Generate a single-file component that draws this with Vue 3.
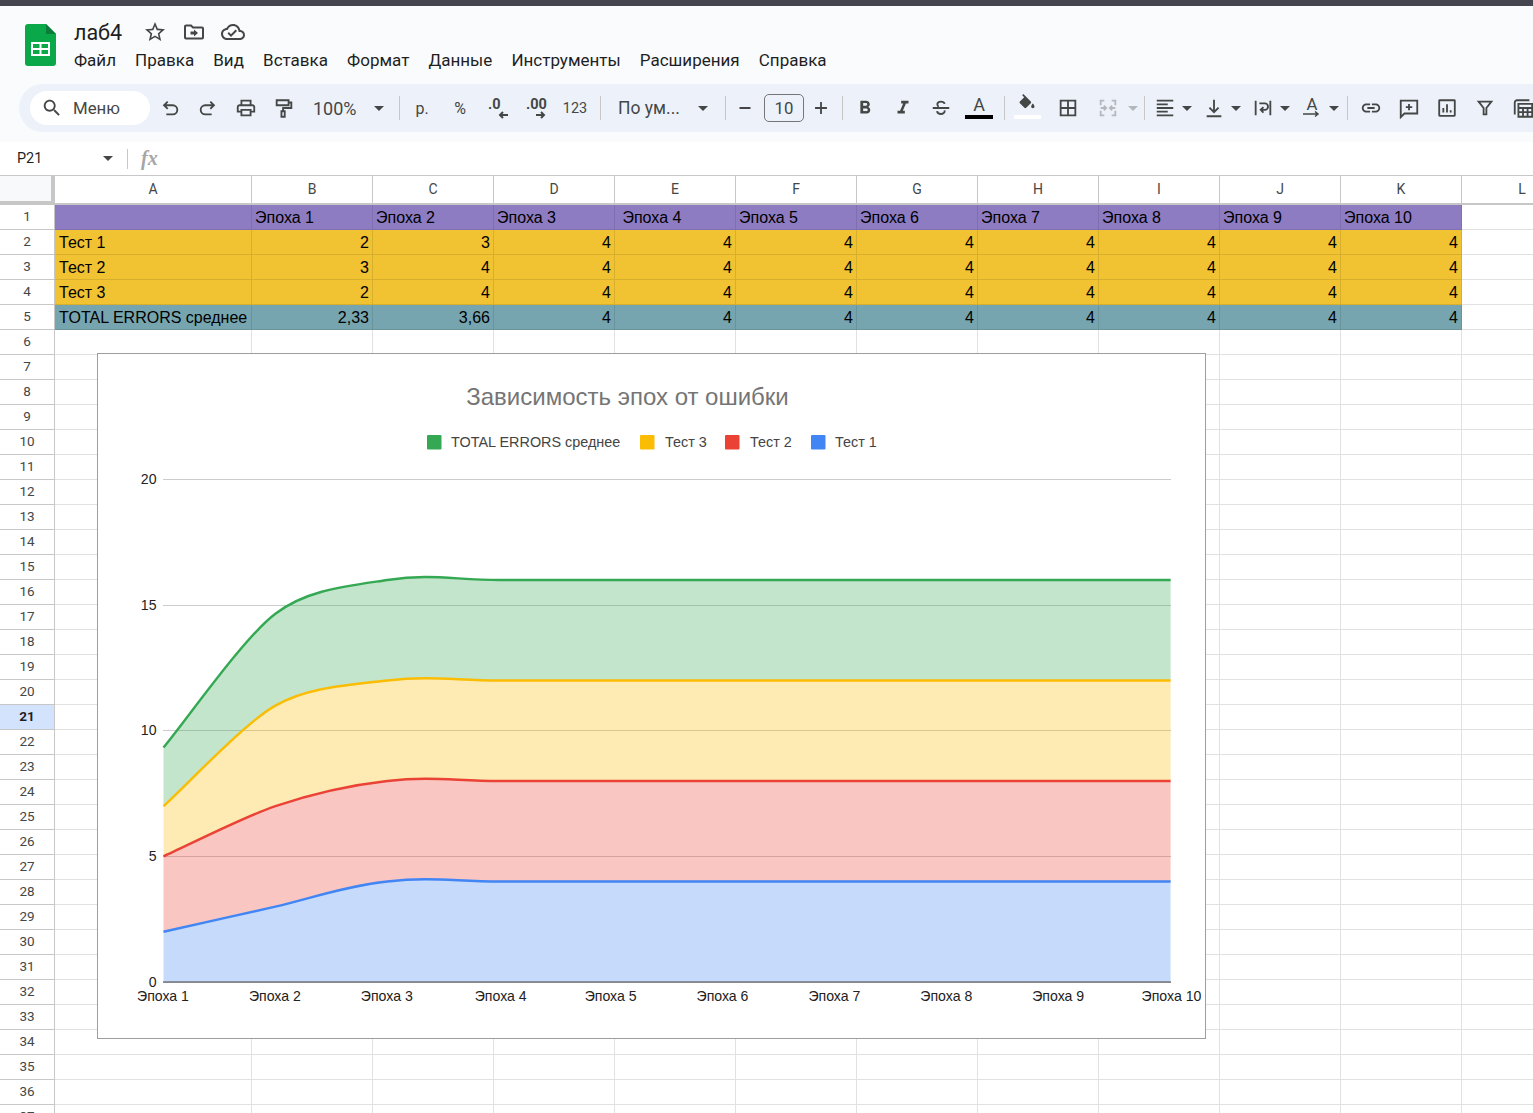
<script setup>
const menu = ['Файл', 'Правка', 'Вид', 'Вставка', 'Формат', 'Данные', 'Инструменты', 'Расширения', 'Справка']

const P = {
  search: { f: 'M15.5 14h-.79l-.28-.27C15.41 12.59 16 11.11 16 9.5 16 5.91 13.09 3 9.5 3S3 5.91 3 9.5 5.91 16 9.5 16c1.61 0 3.09-.59 4.23-1.57l.27.28v.79l5 4.99L20.49 19l-4.99-5zm-6 0C7.01 14 5 11.99 5 9.5S7.01 5 9.5 5 14 7.01 14 9.5 11.99 14 9.5 14z' },
  star: { f: 'M22 9.24l-7.19-.62L12 2 9.19 8.63 2 9.24l5.46 4.73L5.82 21 12 17.27 18.18 21l-1.63-7.03L22 9.24zM12 15.4l-3.76 2.27 1-4.28-3.32-2.88 4.38-.38L12 6.1l1.71 4.04 4.38.38-3.32 2.88 1 4.28L12 15.4z' },
  move: { s: 'M3 6.5a1 1 0 0 1 1-1h5l2 2h9a1 1 0 0 1 1 1v9a1 1 0 0 1-1 1H4a1 1 0 0 1-1-1z', f: 'M12 9.5l4 3.5-4 3.5V14.5H8.5v-3H12z' },
  cloud: { f: 'M19.35 10.04C18.67 6.59 15.64 4 12 4 9.11 4 6.6 5.64 5.35 8.04 2.34 8.36 0 10.91 0 14c0 3.31 2.69 6 6 6h13c2.76 0 5-2.24 5-5 0-2.64-2.05-4.78-4.65-4.96zM19 18H6c-2.21 0-4-1.79-4-4 0-2.05 1.53-3.76 3.56-3.97l1.07-.11.5-.95C8.08 7.14 9.94 6 12 6c2.62 0 4.88 1.86 5.39 4.43l.3 1.5 1.53.11c1.56.1 2.78 1.41 2.78 2.96 0 1.65-1.35 3-3 3zm-9-3.82l-2.09-2.09L6.5 13.5 10 17l6.01-6.01-1.41-1.41z' },
  undo: { s: 'M9.5 5 5.5 9l4 4M5.5 9H15a5 5 0 0 1 0 10H8' },
  redo: { s: 'M14.5 5l4 4-4 4M18.5 9H9a5 5 0 0 0 0 10h7' },
  print: { f: 'M19 8h-1V3H6v5H5c-1.66 0-3 1.34-3 3v6h4v4h12v-4h4v-6c0-1.66-1.34-3-3-3zM8 5h8v3H8V5zm8 12v2H8v-4h8v2zm2-2v-2H6v2H4v-4c0-.55.45-1 1-1h14c.55 0 1 .45 1 1v4h-2z' },
  paint: { s: 'M4 3.5h13v5.5H4zM17 6h3v6h-9v3.5M9.2 15.5h3.6v6H9.2z' },
  minus: { s: 'M6 12h12' },
  plus: { s: 'M5.5 12h13M12 5.5v13' },
  bold: { f: 'M15.6 10.79c.97-.67 1.65-1.77 1.65-2.79 0-2.26-1.75-4-4-4H7v14h7.04c2.09 0 3.71-1.7 3.71-3.79 0-1.52-.86-2.82-2.15-3.42zM10 6.5h3c.83 0 1.5.67 1.5 1.5s-.67 1.5-1.5 1.5h-3v-3zm3.5 9H10v-3h3.5c.83 0 1.5.67 1.5 1.5s-.67 1.5-1.5 1.5z', s: 'M8.5 5.5v11h5' },
  italic: { f: 'M10 4v3h2.21l-3.42 8H6v3h8v-3h-2.21l3.42-8H18V4z' },
  strike: { s: 'M3 12h18M16 7.5C15.5 5.5 14 5 12 5S8 6 8 8c0 1.2.6 2 1.5 2.6M16 14.5c.4 2.5-1.8 4-4 4s-4-1-4.3-3.2' },
  fill: { f: 'M16.56 8.94L7.62 0 6.21 1.41l2.38 2.38-5.15 5.15c-.59.59-.59 1.54 0 2.12l5.5 5.5c.29.29.68.44 1.06.44s.77-.15 1.06-.44l5.5-5.5c.59-.58.59-1.53 0-2.12zM19 11.5s-2 2.17-2 3.5c0 1.1.9 2 2 2s2-.9 2-2c0-1.33-2-3.5-2-3.5z' },
  borders: { s: 'M4 4h16v16H4zM12 4v16M4 12h16' },
  merge: { s: 'M4 9V4h4M16 4h4v5M4 15v5h4M16 20h4v-5M4 12h6M7.5 9.5 10 12l-2.5 2.5M20 12h-6M16.5 9.5 14 12l2.5 2.5' },
  align: { s: 'M3 4h18M3 8h12M3 12h18M3 16h12M3 20h18' },
  valign: { s: 'M12 3v13M7 11.5l5 5 5-5M4 21h16' },
  wrap: { s: 'M4 4v16M20 4v16M8 7h6a3.5 3.5 0 0 1 0 7h-4M12.5 11l-3 3 3 3' },
  link: { f: 'M3.9 12c0-1.71 1.39-3.1 3.1-3.1h4V7H7c-2.76 0-5 2.24-5 5s2.24 5 5 5h4v-1.9H7c-1.71 0-3.1-1.39-3.1-3.1zM8 13h8v-2H8v2zm9-6h-4v1.9h4c1.71 0 3.1 1.39 3.1 3.1s-1.39 3.1-3.1 3.1h-4V17h4c2.76 0 5-2.24 5-5s-2.24-5-5-5z' },
  comment: { s: 'M3 4h18v14H7l-4 4zM12 7.5v7M8.5 11h7' },
  chart: { s: 'M4 3.5h16a.5.5 0 0 1 .5.5v16a.5.5 0 0 1-.5.5H4a.5.5 0 0 1-.5-.5V4a.5.5 0 0 1 .5-.5zM8 12v5M12 8v9M16 14.5V17' },
  filter: { s: 'M5 5h14l-5.5 7v7h-3v-7z' },
  table: { s: 'M3 19V6a2.5 2.5 0 0 1 2.5-2.5H19M7 7.5h15v14H7zM7 12h15M7 16.5h15M12 12v9.5M17 12v9.5' }
}

const tools = [
  { t: 'icon', i: 'undo' }, { t: 'icon', i: 'redo' }, { t: 'icon', i: 'print' }, { t: 'icon', i: 'paint' },
  { t: 'select', label: '100%', c: 'zoom' },
  { t: 'sep', c: 's1' },
  { t: 'text', label: 'р.' }, { t: 'text', label: '%' },
  { t: 'dec', label: '.0', dir: 'M10 4H2M5 1 2 4l3 3' },
  { t: 'dec', label: '.00', dir: 'M0 4h8M5 1l3 3-3 3' },
  { t: 'text', label: '123', c: 'num' },
  { t: 'sep', c: 's2' },
  { t: 'select', label: 'По ум...', c: 'font' },
  { t: 'sep', c: 's3' },
  { t: 'icon', i: 'minus' },
  { t: 'size', label: '10' },
  { t: 'icon', i: 'plus', c: 'w34' },
  { t: 'sep', c: 's4' },
  { t: 'icon', i: 'bold', c: 'ml3' }, { t: 'icon', i: 'italic' }, { t: 'icon', i: 'strike' },
  { t: 'color' },
  { t: 'sep', c: 's5' },
  { t: 'bucket', i: 'fill' },
  { t: 'icon', i: 'borders', c: 'ml3' },
  { t: 'icon', i: 'merge', c: 'off ml2' },
  { t: 'caret', c: 'off narrow' },
  { t: 'sep', c: 's6' },
  { t: 'icon', i: 'align', c: 'w30 ml5' }, { t: 'caret' },
  { t: 'icon', i: 'valign', c: 'w30 ml5' }, { t: 'caret' },
  { t: 'icon', i: 'wrap', c: 'w30 ml5' }, { t: 'caret' },
  { t: 'rot' }, { t: 'caret' },
  { t: 'sep', c: 's7' },
  { t: 'icon', i: 'link', c: 'ml4' }, { t: 'icon', i: 'comment' }, { t: 'icon', i: 'chart' }, { t: 'icon', i: 'filter' }, { t: 'icon', i: 'table' }
]

const cols = ['A', 'B', 'C', 'D', 'E', 'F', 'G', 'H', 'I', 'J', 'K', 'L']
const fours = Array(8).fill('4')
const filled = {
  1: { c: 'purple', v: ['', 'Эпоха 1', 'Эпоха 2', 'Эпоха 3', ' Эпоха 4', 'Эпоха 5', 'Эпоха 6', 'Эпоха 7', 'Эпоха 8', 'Эпоха 9', 'Эпоха 10'] },
  2: { c: 'yellow', v: ['Тест 1', '2', '3', ...fours] },
  3: { c: 'yellow', v: ['Тест 2', '3', '4', ...fours] },
  4: { c: 'yellow', v: ['Тест 3', '2', '4', ...fours] },
  5: { c: 'teal', v: ['TOTAL ERRORS среднее', '2,33', '3,66', ...fours] }
}
const rows = Array.from({ length: 37 }, (_, i) => {
  const n = i + 1
  const r = filled[n]
  return {
    n,
    cells: cols.map((_, c) => ({
      text: r && c < 11 ? r.v[c] : '',
      cls: r && c < 11 ? [r.c, n > 1 && c > 0 ? 'right' : ''] : []
    }))
  }
})

/* chart */
const X = (i) => 163.5 + i * 111.9
const Y = (v) => 982 - v * 25.125
const stacked = [
  [0, 0, 0, 0, 0, 0, 0, 0, 0, 0],
  [2, 3, 4, 4, 4, 4, 4, 4, 4, 4],
  [5, 7, 8, 8, 8, 8, 8, 8, 8, 8],
  [7, 11, 12, 12, 12, 12, 12, 12, 12, 12],
  [9.33, 14.66, 16, 16, 16, 16, 16, 16, 16, 16]
]
const pts = (vals) => vals.map((v, i) => [X(i), Y(v)])
const K = [0.2, 0.14, 0.2, 0.2, 0.2, 0.2, 0.2, 0.2, 0.2, 0.2]
function segs(p, reversed) {
  let d = ''
  const n = p.length
  for (let i = 0; i < n - 1; i++) {
    const a = p[Math.max(i - 1, 0)], b = p[i], c = p[i + 1], e = p[Math.min(i + 2, n - 1)]
    const kb = K[reversed ? n - 1 - i : i]
    const kc = K[reversed ? n - 2 - i : i + 1]
    const c1 = [b[0] + (c[0] - a[0]) * kb, b[1] + (c[1] - a[1]) * kb]
    const c2 = [c[0] - (e[0] - b[0]) * kc, c[1] - (e[1] - b[1]) * kc]
    d += `C${c1[0].toFixed(1)} ${c1[1].toFixed(1)} ${c2[0].toFixed(1)} ${c2[1].toFixed(1)} ${c[0].toFixed(1)} ${c[1].toFixed(1)}`
  }
  return d
}
const colors = ['#4285f4', '#ea4335', '#fbbc04', '#34a853']
const series = colors.map((color, s) => {
  const up = pts(stacked[s + 1])
  const lo = pts(stacked[s]).reverse()
  const line = `M${up[0][0]} ${up[0][1]}${segs(up, false)}`
  return { color, line, area: `${line}L${lo[0][0]} ${lo[0][1]}${segs(lo, true)}Z` }
})
const yTicks = [0, 5, 10, 15, 20].map((v) => ({ v, y: Math.floor(Y(v)) + 0.5 }))
const xTicks = ['Эпоха 1', 'Эпоха 2', 'Эпоха 3', 'Эпоха 4', 'Эпоха 5', 'Эпоха 6', 'Эпоха 7', 'Эпоха 8', 'Эпоха 9', 'Эпоха 10']
  .map((label, i) => ({ label, x: i === 9 ? 1171.5 : i === 3 ? X(i) + 1.5 : X(i) - 0.5 }))
const legend = [
  { c: '#34a853', x: 427, tx: 451, label: 'TOTAL ERRORS среднее' },
  { c: '#fbbc04', x: 640, tx: 665, label: 'Тест 3' },
  { c: '#ea4335', x: 725, tx: 750, label: 'Тест 2' },
  { c: '#4285f4', x: 811, tx: 835, label: 'Тест 1' }
]
</script>

<template>
  <div class="page">
    <div class="topbar"></div>
    <header class="head">
      <svg class="logo" viewBox="0 0 31 42">
        <path d="M3 0h18l10 10v29a3 3 0 0 1-3 3H3a3 3 0 0 1-3-3V3a3 3 0 0 1 3-3z" fill="#0ba84a" />
        <path d="M21 0l10 10H21z" fill="#0a7d3a" />
        <path d="M6 18h19v14H6zM8 20v4h6.5v-4zm8.5 0v4H23v-4zM8 26v4h6.5v-4zm8.5 0v4H23v-4z" fill="#fff" fill-rule="evenodd" />
      </svg>
      <div class="titles">
        <div class="doc">
          <span class="name">лаб4</span>
          <svg v-for="n in ['star', 'move', 'cloud']" :key="n" class="ic dark" viewBox="0 0 24 24">
            <path v-if="P[n].f" :d="P[n].f" />
            <path v-if="P[n].s" :d="P[n].s" class="st" />
          </svg>
        </div>
        <nav class="menu"><span v-for="m in menu" :key="m">{{ m }}</span></nav>
      </div>
    </header>
    <div class="headfill">
      <div class="toolbar">
        <div class="searchbox">
          <svg class="ic" viewBox="0 0 24 24"><path :d="P.search.f" /></svg>
          <span>Меню</span>
        </div>
        <template v-for="(t, i) in tools" :key="i">
          <div v-if="t.t === 'sep'" class="sep" :class="t.c"></div>
          <div v-else-if="t.t === 'icon'" class="btn" :class="t.c">
            <svg class="ic" viewBox="0 0 24 24">
              <path v-if="P[t.i].f" :d="P[t.i].f" />
              <path v-if="P[t.i].s" :d="P[t.i].s" class="st" />
            </svg>
          </div>
          <div v-else-if="t.t === 'text'" class="btn label" :class="t.c">{{ t.label }}</div>
          <div v-else-if="t.t === 'select'" class="select" :class="t.c">
            <span>{{ t.label }}</span><i class="tri"></i>
          </div>
          <div v-else-if="t.t === 'caret'" class="caretbtn" :class="t.c"><i class="tri"></i></div>
          <div v-else-if="t.t === 'size'" class="size">{{ t.label }}</div>
          <div v-else-if="t.t === 'dec'" class="btn dec">
            <b>{{ t.label }}</b>
            <svg viewBox="0 0 10 8"><path :d="t.dir" class="st" /></svg>
          </div>
          <div v-else-if="t.t === 'color'" class="btn color"><span>A</span><i></i></div>
          <div v-else-if="t.t === 'bucket'" class="btn bucket ml3">
            <svg class="ic" viewBox="0 0 24 24"><path :d="P.fill.f" /></svg><i></i>
          </div>
          <div v-else-if="t.t === 'rot'" class="btn rot w30 ml5">
            <span>A</span>
            <svg viewBox="0 0 20 8"><path d="M1 3h15M13 0.5 16 3l-3 2.5" class="st" /></svg>
          </div>
        </template>
      </div>
    </div>
    <div class="formula">
      <span class="ref">P21</span><i class="tri"></i>
      <div class="fsep"></div>
      <span class="fx">fx</span>
    </div>
    <div class="sheet">
      <div class="grid">
        <div class="corner"></div>
        <div v-for="c in cols" :key="c" class="colh">{{ c }}</div>
        <template v-for="r in rows" :key="r.n">
          <div class="rowh" :class="{ active: r.n === 21 }">{{ r.n }}</div>
          <div v-for="(cell, ci) in r.cells" :key="ci" class="cell" :class="[cell.cls, { first: ci === 0 }]">{{ cell.text }}</div>
        </template>
      </div>
      <svg class="chart" viewBox="97 353 1109 686" width="1109" height="686">
        <rect x="97.5" y="353.5" width="1108" height="685" fill="#fff" stroke="#9e9e9e" />
        <text x="627.5" y="405" text-anchor="middle" class="title">Зависимость эпох от ошибки</text>
        <g v-for="l in legend" :key="l.label">
          <rect :x="l.x" y="435" width="14.5" height="14.5" rx="1" :fill="l.c" />
          <text :x="l.tx" y="447" class="lg">{{ l.label }}</text>
        </g>
        <g v-for="t in yTicks" :key="t.v">
          <line x1="163" x2="1171" :y1="t.y" :y2="t.y" stroke="#ccc" />
          <text x="156.5" :y="t.y + 4" text-anchor="end" class="ax">{{ t.v }}</text>
        </g>
        <path v-for="s in series" :key="s.color + 'a'" :d="s.area" :fill="s.color" fill-opacity="0.3" />
        <path v-for="s in series" :key="s.color" :d="s.line" :stroke="s.color" fill="none" stroke-width="2.4" />
        <line x1="163" x2="1171" y1="982" y2="982" stroke="#333" stroke-opacity=".6" stroke-width="1.4" />
        <text v-for="t in xTicks" :key="t.label" :x="t.x" y="1001" text-anchor="middle" class="ax">{{ t.label }}</text>
      </svg>
    </div>
  </div>
</template>

<style>
html, body { margin: 0; padding: 0; background: #fff; }
</style>

<style scoped>
.page { width: 1533px; height: 1113px; overflow: hidden; font-family: Roboto, "Liberation Sans", sans-serif; color: #1f1f1f; display: flex; flex-direction: column; }
.topbar { height: 6px; background: #45454f; flex: none; }
.head { height: 78px; flex: none; background: #f9fbfd; display: flex; box-sizing: border-box; padding: 16px 0 0 25px; }
.logo { width: 31px; height: 42px; margin: 2px 18px 0 0; flex: none; }
.titles { display: flex; flex-direction: column; }
.doc { display: flex; align-items: center; height: 20px; }
.name { font-size: 21.5px; width: 69px; color: #1f1f1f; }
.doc .ic { width: 24px; height: 24px; margin-right: 15px; }
.menu { display: flex; gap: 19.1px; font-size: 17px; margin-top: 8px; line-height: 20px; color: #1f1f1f; }
.headfill { background: #f9fbfd; height: 58px; flex: none; box-sizing: border-box; padding-left: 19px; }
.toolbar { height: 48px; background: #edf2fa; border-radius: 24px 0 0 24px; display: flex; align-items: center; padding-left: 11px; overflow: hidden; color: #444746; }
.searchbox { width: 120px; height: 34px; flex: none; border-radius: 17px; background: #fff; display: flex; align-items: center; box-sizing: border-box; padding-left: 11px; font-size: 16.8px; margin-right: 1px; }
.searchbox .ic { margin-right: 10px; }
.ic { width: 22px; height: 22px; fill: currentColor; flex: none; }
.dark { color: #444746; }
.st { fill: none; stroke: currentColor; stroke-width: 2; }
.btn { width: 38px; height: 34px; flex: none; display: flex; align-items: center; justify-content: center; position: relative; }
.w34 { width: 34px; }
.w30 { width: 30px; }
.ml2 { margin-left: 2px; }
.ml3 { margin-left: 3px; }
.ml4 { margin-left: 4px; }
.ml5 { margin-left: 5px; }
.off { color: #b4b8bd; }
.label { font-size: 16px; }
.num { font-size: 14.4px; width: 40px; }
.sep { width: 1px; height: 24px; background: #c7c7c7; flex: none; }
.s1 { margin: 0 3px 0 8px; }
.s2 { margin: 0 7px 0 5px; }
.s3 { margin: 0 0 0 9px; }
.s4 { margin: 0 0 0 4px; }
.s5 { margin: 0 0 0 6px; }
.s6 { margin: 0 0 0 5px; }
.s7 { margin: 0 0 0 6px; }
.select { display: flex; align-items: center; justify-content: space-between; flex: none; box-sizing: border-box; }
.zoom { width: 88px; padding: 0 7px 0 10px; font-size: 18px; }
.font { width: 108px; padding: 0 8px 0 10px; font-size: 17.5px; }
.tri { display: block; width: 0; height: 0; border-left: 5.5px solid transparent; border-right: 5.5px solid transparent; border-top: 5.5px solid currentColor; }
.caretbtn { width: 14px; flex: none; display: flex; justify-content: center; }
.narrow { width: 12px; }
.size { width: 40px; height: 28px; box-sizing: border-box; border: 1px solid #747775; border-radius: 5px; display: flex; align-items: center; justify-content: center; font-size: 16.8px; flex: none; }
.dec { flex-direction: column; align-items: flex-start; justify-content: flex-start; box-sizing: border-box; padding: 7px 0 0 9px; }
.dec b { font-size: 14.5px; line-height: 13px; font-weight: 700; }
.dec svg { width: 10px; height: 8px; margin: 0 0 0 10px; }
.color span { font-size: 18px; line-height: 16px; margin-top: -7px; }
.color i { position: absolute; left: 5px; bottom: 6px; width: 28px; height: 4px; background: #000; }
.bucket .ic { margin-top: -9px; width: 20px; height: 20px; }
.bucket i { position: absolute; left: 6px; bottom: 6px; width: 27px; height: 4px; background: #fff; }
.rot { flex-direction: column; }
.rot span { font-size: 16.8px; line-height: 14px; }
.rot svg { width: 20px; height: 8px; }
.rot .st { stroke-width: 1.5; }
.formula { height: 33px; flex: none; background: #fff; display: flex; align-items: center; box-sizing: border-box; padding-left: 17px; position: relative; }
.ref { font-size: 14.4px; width: 86px; color: #1f1f1f; }
.formula .tri { color: #444746; }
.fsep { width: 1px; height: 20px; background: #c7c7c7; margin: 0 13px 0 14px; }
.fx { font-family: "Liberation Serif", serif; font-style: italic; font-weight: 700; font-size: 20px; color: #a6a6a6; }
.sheet { position: relative; flex: 1; min-height: 0; border-top: 1px solid #c7c7c7; overflow: hidden; }
.grid { display: grid; grid-template-columns: 55px 197px repeat(11, 121px); grid-auto-rows: 25px; grid-template-rows: 29px; }
.corner { background: #f8f9fa; border-right: 4px solid #c7c7c7; border-bottom: 4px solid #c7c7c7; box-sizing: border-box; }
.colh { background: #fff; border-right: 1px solid #c7c7c7; border-bottom: 2px solid #c7c7c7; box-sizing: border-box; display: flex; align-items: center; justify-content: center; font-size: 14px; color: #444746; padding-bottom: 1px; }
.rowh { background: #fff; border-right: 1px solid #c7c7c7; border-bottom: 1px solid #c7c7c7; box-sizing: border-box; display: flex; align-items: center; justify-content: center; font-size: 13.5px; color: #444746; padding-bottom: 2px; }
.active { background: #d3e3fd; font-weight: 700; color: #1f1f1f; }
.cell { border-right: 1px solid #e1e1e1; border-bottom: 1px solid #e1e1e1; box-sizing: border-box; font-family: "Liberation Sans", Arial, sans-serif; font-size: 16px; line-height: 24px; padding: 1px 3px 0; color: #000; white-space: pre; overflow: hidden; }
.first { padding-left: 4px; }
.purple { background: #8e7cc3; border-color: #7f6fb0; }
.yellow { background: #f1c232; border-color: #d8ae2d; }
.teal { background: #76a5af; border-color: #6a949d; }
.right { text-align: right; }
.chart { position: absolute; left: 97px; top: 177px; }
.chart text { font-family: "Liberation Sans", Arial, sans-serif; }
.title { font-size: 24px; fill: #757575; }
.lg { font-size: 14.4px; fill: #444; }
.ax { font-size: 14.1px; fill: #222; }
</style>
